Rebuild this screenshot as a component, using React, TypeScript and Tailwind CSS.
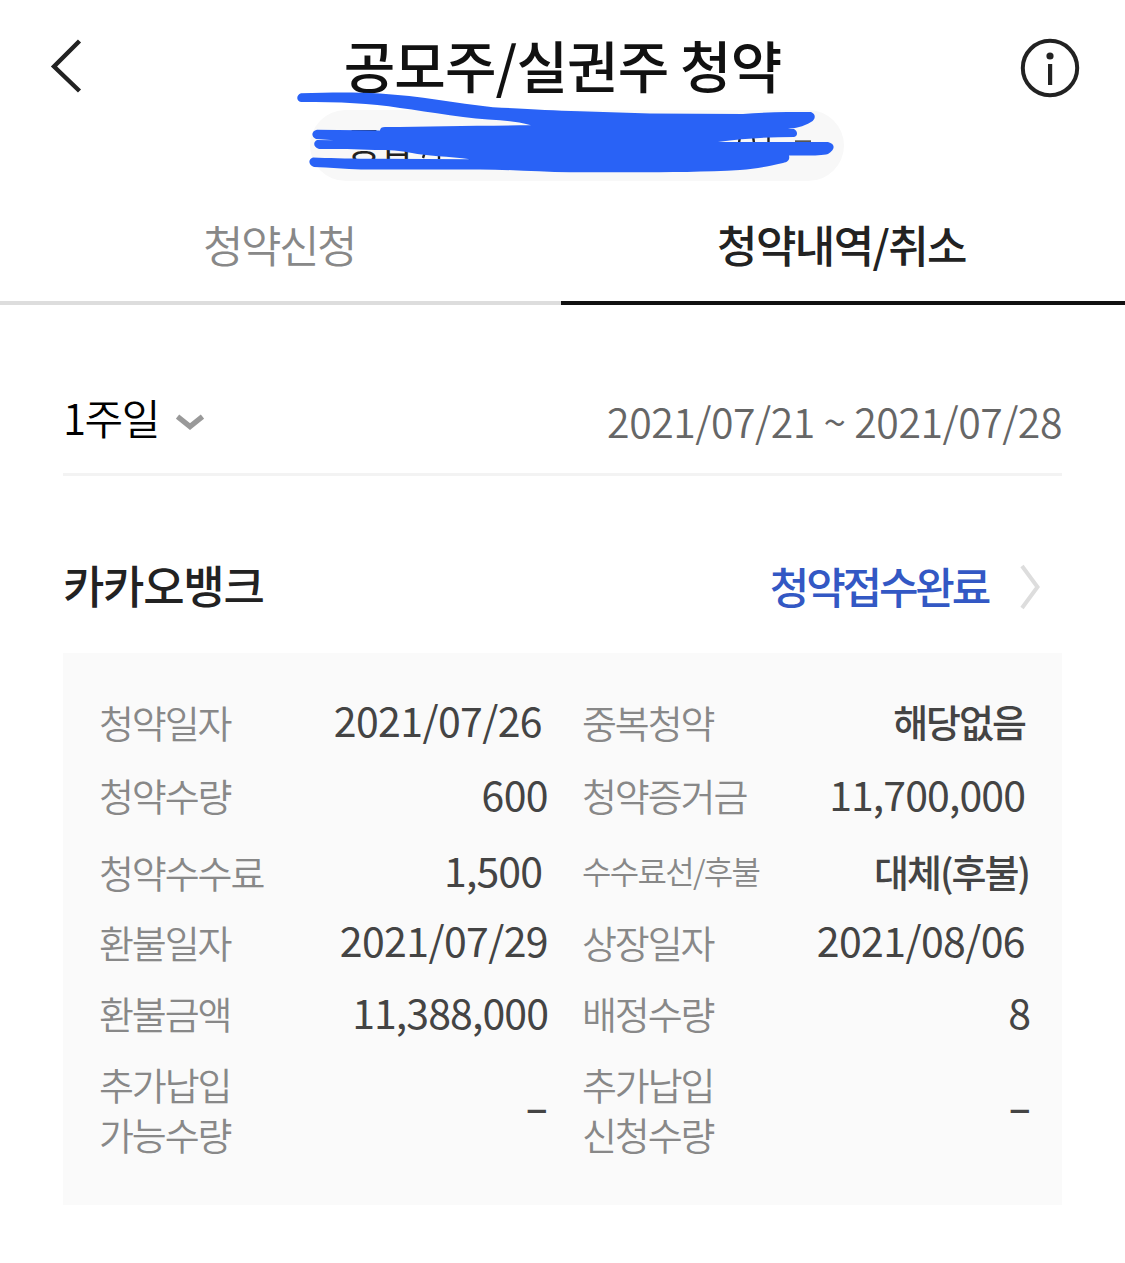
type Cell = {
  label: string[];
  value: string;
  labelClass?: string;
  valueClass?: string;
};

const LABEL = "text-[38px] tracking-[-2.1px]";
const HANGUL = "text-[38px] tracking-[-2px] pb-[1px]";
const NUMBER = "text-[41px] pb-[4px]";

const rows: { height: string; left: Cell; right: Cell }[] = [
  {
    height: "h-[73px]",
    left: { label: ["청약일자"], value: "2021/07/26", valueClass: "mr-[6px] tracking-[-0.6px]" },
    right: { label: ["중복청약"], value: "해당없음", valueClass: "mr-[6px]" },
  },
  {
    height: "h-[74px]",
    left: { label: ["청약수량"], value: "600", valueClass: "tracking-[-0.6px]" },
    right: { label: ["청약증거금"], value: "11,700,000", valueClass: "mr-[6px] tracking-[-0.9px]" },
  },
  {
    height: "h-[79px]",
    left: { label: ["청약수수료"], value: "1,500", valueClass: "mr-[6px] tracking-[-0.9px]" },
    right: {
      label: ["수수료선/후불"],
      value: "대체(후불)",
      labelClass: "text-[32px] tracking-[-1.7px] pb-[3px]",
      valueClass: "mr-[2px]",
    },
  },
  {
    height: "h-[61px]",
    left: { label: ["환불일자"], value: "2021/07/29", valueClass: "tracking-[-0.6px]" },
    right: { label: ["상장일자"], value: "2021/08/06", valueClass: "mr-[6px] tracking-[-0.6px]" },
  },
  {
    height: "h-[82px]",
    left: { label: ["환불금액"], value: "11,388,000", valueClass: "tracking-[-0.9px]" },
    right: { label: ["배정수량"], value: "8" },
  },
  {
    height: "h-[110px]",
    left: { label: ["추가납입", "가능수량"], value: "–", valueClass: "mb-[3px] font-medium" },
    right: { label: ["추가납입", "신청수량"], value: "–", valueClass: "mb-[3px] font-medium" },
  },
];

function DetailCell({ label, value, labelClass = LABEL, valueClass = "" }: Cell) {
  const isHangul = /[가-힣]/.test(value);

  return (
    <div className="flex items-center justify-between whitespace-nowrap">
      <div className={`font-[350] leading-[50px] text-[#888888] ${labelClass}`}>
        {label.map((line) => (
          <div key={line}>{line}</div>
        ))}
      </div>
      <span
        className={`leading-none text-[#444444] ${isHangul ? `font-medium ${HANGUL}` : NUMBER} ${valueClass}`}
      >
        {value}
      </span>
    </div>
  );
}

function Header() {
  return (
    <header className="flex h-[110px] items-start justify-between pl-[50px] pr-[45px]">
      <svg className="mt-[38px] h-[56px] w-[60px]" viewBox="0 0 60 56" fill="none">
        <path d="M29.5 3 L4 28.5 L29.5 53" stroke="#222222" strokeWidth="4.4" />
      </svg>
      <h1 className="mr-[5px] mt-[24px] whitespace-nowrap text-[56px] font-medium leading-[80px] tracking-[-0.9px] text-[#111111]">
        공모주/실권주 청약
      </h1>
      <svg className="mt-[38px] h-[60px] w-[60px]" viewBox="0 0 60 60" fill="none">
        <circle cx="30" cy="30" r="27.2" stroke="#222222" strokeWidth="4" />
        <circle cx="30" cy="18" r="3.6" fill="#222222" />
        <rect x="28" y="26" width="4.2" height="21" fill="#222222" />
      </svg>
    </header>
  );
}

/* Account selector, scribbled over with a blue marker */
function AccountPill() {
  return (
    <div className="relative ml-[310px] flex h-[71px] w-[534px] items-center rounded-full bg-[#f8f8f8] pl-[37px]">
      <span className="pb-[2px] text-[37px] leading-none tracking-[-1px] text-[#222222]">종합</span>
      <svg
        className="absolute -left-[20px] -top-[20px] h-[90px] w-[560px]"
        viewBox="290 90 560 90"
        fill="none"
      >
        <path
          d="M425 152 L423 158 M439 150 V159 M470 158 V160 M740 136 L739 143 M753 136 L754 143 M768.5 136 V143"
          stroke="#222222"
          strokeWidth="2.4"
        />
        <path d="M795 141.5 H811" stroke="#555555" strokeWidth="2.4" />
        <path
          fill="#2962f6"
          d="M301 93.3 C330 92.3 355 92 380 93.5 C420 96 455 103 493 107.3 C530 109 550 110.5 580 111.3 L650 113.5 L743 114 C765 112 790 112 811 112 C816 114 816 119 811 122 C803 127 795 128 788 129 L794 129 C798 131 798 136 794 137 C770 137 745 138 718 142 L828 142 C836 144 835 150 828 154 C821 156 805 155.5 789 155.5 C790 160 788 162 783 163 C765 167 755 169 740 170 C690 173 640 172 570 172.3 C540 172 510 169.5 480 169.5 L361 169.5 C345 169 330 167.5 314 167 C308 165 308 159 313 157.5 C330 158 350 159 380 158.7 L470 159.3 C450 156.5 425 156 412 153 C400 150.5 390 150 375 150 C355 149 340 149 319 149 C313 147 313 142 317 140 L334 140.2 L316 139 C311 137 311 131 317 129.7 L380 130.5 C380 128 382 127 385 127 C430 126.5 480 125.5 531 125.3 C520 122 510 121 500 120.3 C470 119 430 112 400 108 C370 103 340 102 301 102 C296 101 296 95 301 93.3 Z"
        />
      </svg>
    </div>
  );
}

function Tabs() {
  return (
    <nav className="flex h-[124px] whitespace-nowrap text-center text-[44px] leading-[60px]">
      <div className="w-[561px] border-b-4 border-[#dddddd] pr-[3px] pt-[33px] font-[350] tracking-[-2.5px] text-[#888888]">
        청약신청
      </div>
      <div className="w-[564px] border-b-4 border-[#111111] pr-[3px] pt-[33px] font-medium tracking-[-1.6px] text-[#222222]">
        청약내역/취소
      </div>
    </nav>
  );
}

export default function App() {
  return (
    <div className="h-[1263px] w-[1125px] overflow-hidden bg-white font-['Noto_Sans_CJK_KR',sans-serif]">
      <Header />
      <AccountPill />
      <Tabs />

      <main className="px-[63px]">
        {/* Period filter */}
        <div className="mt-[60px] flex h-[111px] items-start justify-between border-b-[3px] border-[#f3f3f3]">
          <div className="flex items-center gap-[17px] pt-[22px]">
            <span className="text-[42px] font-[350] leading-[60px] tracking-[-1.5px] text-black">
              1주일
            </span>
            <svg className="mt-[9px] h-[18px] w-[28px]" viewBox="0 0 28 18" fill="none">
              <path d="M1.5 3.5 L14 13.5 L26.5 3.5" stroke="#999999" strokeWidth="5.4" />
            </svg>
          </div>
          <span className="pt-[25px] text-[41px] font-[350] leading-[60px] tracking-[-0.45px] text-[#666666]">
            2021/07/21 ~ 2021/07/28
          </span>
        </div>

        <div className="flex h-[177px] items-start justify-between pr-[21px] pt-[79px]">
          <h2 className="text-[45px] font-medium leading-[60px] tracking-[-1.3px] text-[#222222]">
            카카오뱅크
          </h2>
          <div className="flex items-center gap-[32px]">
            <span className="text-[43px] font-medium leading-[60px] tracking-[-3.2px] text-[#3358c4]">
              청약접수완료
            </span>
            <svg className="mt-[4px] h-[46px] w-[21px]" viewBox="0 0 21 46" fill="none">
              <path d="M2 2 L17.5 23 L2 44" stroke="#dddddd" strokeWidth="4" />
            </svg>
          </div>
        </div>

        <section className="h-[552px] bg-[#fafafa] pl-[36px] pr-[32px] pt-[32px]">
          {rows.map((row) => (
            <div key={row.left.label[0]} className={`grid grid-cols-[449px_449px] gap-[34px] ${row.height}`}>
              <DetailCell {...row.left} />
              <DetailCell {...row.right} />
            </div>
          ))}
        </section>
      </main>
    </div>
  );
}
